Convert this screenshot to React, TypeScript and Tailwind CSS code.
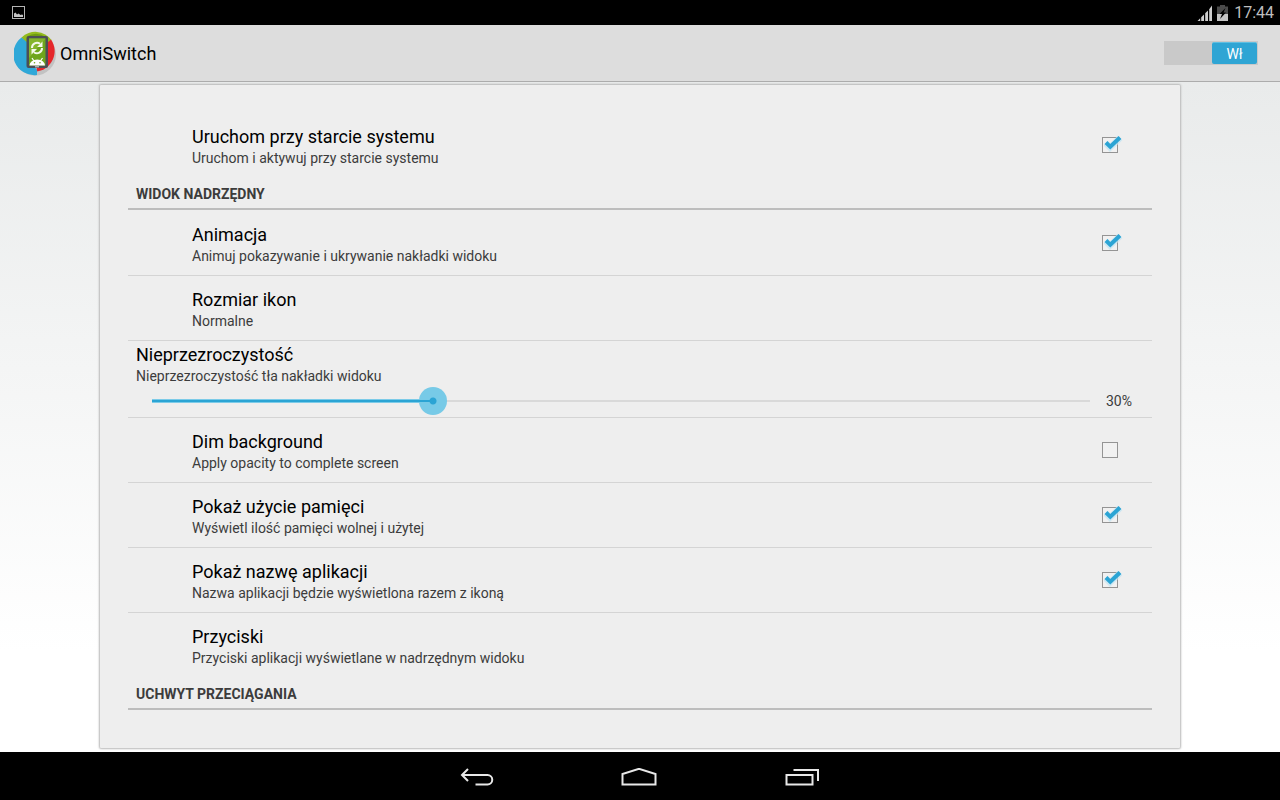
import { useState } from "react";
import type { ReactNode } from "react";

function AppLogo() {
  return (
    <svg viewBox="0 0 44 46" className="h-[46px] w-11 shrink-0" aria-hidden="true">
      <circle cx="21" cy="23.5" r="21" fill="#000" opacity="0.12" />
      <path d="M7.500 6.500 A20 20 0 0 1 37.500 9 L31 16 H15 Z" fill="#93bb1d" />
      <path d="M13 5.500 A17 17 0 0 1 31 5.500 Z" fill="#6f9a12" />
      <path d="M37 8.500 A20.500 20.500 0 0 1 22.500 40.500 L23 30 L33 12 Z" fill="#e5262b" />
      <path d="M7.500 6.500 A21 21 0 0 0 23 44 V39 L16 30 V14 Z" fill="#2fa8d8" />
      <rect x="12.500" y="5" width="21.500" height="32" rx="2" fill="#4c4f55" />
      <rect x="15" y="7.500" width="16.500" height="27" fill="#6fa51c" />
      <path d="M15 7.500 H31.500 L15 27 Z" fill="#84b52c" />
      <g fill="none" stroke="#f4f8ea" strokeWidth="2">
        <path d="M18 17 A5 5 0 0 1 26 12.800" />
        <path d="M28 17 A5 5 0 0 1 20 21.200" />
      </g>
      <path d="M28.500 10.500 V16 H23 Z M17.500 23.500 V18 H23 Z" fill="#f4f8ea" />
      <path d="M15.500 34.500 A7.700 6 0 0 1 31 34.500 Z" fill="#fff" />
      <path d="M18 27 L20 30 M28.500 27 L26.500 30" stroke="#fff" strokeWidth="1.200" />
      <circle cx="20.500" cy="31.800" r="0.800" fill="#6fa51c" />
      <circle cx="26" cy="31.800" r="0.800" fill="#6fa51c" />
      <rect x="21" y="35.300" width="4" height="1" fill="#ddd" />
    </svg>
  );
}

function StatusBar() {
  return (
    <div className="flex h-[25px] shrink-0 items-center justify-between bg-black pr-1.5 pl-3">
      <svg viewBox="0 0 13 13" className="size-[13px]" aria-hidden="true">
        <rect x="0.500" y="0.500" width="12" height="12" fill="none" stroke="#b4b4b4" />
        <path d="M2 11 V7.500 L3.500 6.500 L5 8.500 L6.500 7.500 L8.500 9 L10 8.500 L11 9 V11 Z" fill="#c4c4c4" />
      </svg>
      <div className="flex items-center text-[#bebebe]">
        <svg viewBox="0 0 16 16" className="size-4" aria-hidden="true">
          <g fill="#cfcfcf">
            <path d="M0.500 16 L3.200 13.300 V16 Z" />
            <path d="M4.200 16 V12.300 L7 9.500 V16 Z" />
            <path d="M8.200 16 V8.300 L11 5.500 V16 Z" />
            <path d="M12.200 16 V4.300 L15 0.500 V16 Z" />
          </g>
        </svg>
        <svg viewBox="0 0 11 16" className="mr-1.5 ml-1 h-4 w-[11px]" aria-hidden="true">
          <path d="M3 0 H8 V1.500 H11 V9 H0 V1.500 H3 Z" fill="#4a4a4a" />
          <path d="M0 9 H11 V16 H0 Z" fill="#c4c4c4" />
          <path d="M8.500 3 L2.500 9 H5 L3 14 L9 7.500 H6.500 Z" fill="#000" />
        </svg>
        <span className="text-base leading-6">17:44</span>
      </div>
    </div>
  );
}

function Item({ children, divider = true }: { children: ReactNode; divider?: boolean }) {
  return <li className={divider ? "border-b border-[#d4d4d4]" : "border-b border-transparent"}>{children}</li>;
}

function Labels({ title, summary }: { title: string; summary: string }) {
  return (
    <span className="flex flex-1 flex-col">
      <span className="text-lg leading-[22px] text-black">{title}</span>
      <span className="text-sm leading-5 text-[#3c3c3c]">{summary}</span>
    </span>
  );
}

type RowProps = { title: string; summary: string; divider?: boolean };

function CheckRow({ title, summary, divider, initial }: RowProps & { initial: boolean }) {
  const [on, setOn] = useState(initial);
  return (
    <Item divider={divider}>
      <label className="flex h-16 items-start pt-[13px] pr-[34px] pl-16">
        <Labels title={title} summary={summary} />
        <span className="relative mt-[11px] size-4">
          <input
            type="checkbox"
            checked={on}
            onChange={(e) => setOn(e.target.checked)}
            className="peer block size-4 appearance-none border border-[#949494] bg-[#f1f1f1]"
          />
          <svg
            viewBox="0 0 20 18"
            className="pointer-events-none absolute -top-0.5 left-0.5 hidden h-[18px] w-5 peer-checked:block"
            aria-hidden="true"
          >
            <path d="M1.500 8 L6 12.500 L16 3" fill="none" stroke="#bfe4f3" strokeWidth="6.500" opacity="0.700" />
            <path d="M2 7.500 L6.300 11.800 L16 2.500" fill="none" stroke="#2ba4d4" strokeWidth="4" />
          </svg>
        </span>
      </label>
    </Item>
  );
}

function LinkRow({ title, summary, divider }: RowProps) {
  return (
    <Item divider={divider}>
      <button type="button" className="flex h-16 w-full items-start pt-[13px] pl-16 text-left">
        <Labels title={title} summary={summary} />
      </button>
    </Item>
  );
}

function SectionHeader({ children }: { children: ReactNode }) {
  return (
    <Item divider={false}>
      <h2 className="h-8 border-b-2 border-[#bdbdbd] px-2 pt-1.5 text-sm leading-5 font-bold text-[#3c3c3c] uppercase">
        {children}
      </h2>
    </Item>
  );
}

function OpacityRow() {
  const [value, setValue] = useState(30);
  return (
    <Item>
      <div className="h-[76px] px-2 pt-[3px]">
        <label htmlFor="opacity" className="flex pb-px">
          <Labels title="Nieprzezroczystość" summary="Nieprzezroczystość tła nakładki widoku" />
        </label>
        <div className="flex h-7 items-center pl-0.5">
          <div className="relative flex h-7 flex-1 items-center px-3.5">
            <div className="h-0.5 w-full bg-[#d9d9d9]">
              <div
                className="-mt-px h-1 border-y border-[#7ccbe8] bg-[#2ba4d4]"
                style={{ width: `${value}%` }}
              />
            </div>
            <input
              id="opacity"
              type="range"
              min={0}
              max={100}
              value={value}
              onChange={(e) => setValue(Number(e.target.value))}
              className="absolute inset-0 h-7 w-full appearance-none bg-transparent [&::-webkit-slider-thumb]:size-7 [&::-webkit-slider-thumb]:appearance-none [&::-webkit-slider-thumb]:rounded-full [&::-webkit-slider-thumb]:bg-[radial-gradient(circle_at_center,#2ba4d4_3px,transparent_4px),linear-gradient(90deg,#2ba4d4_50%,transparent_50%)] [&::-webkit-slider-thumb]:bg-[length:100%_100%,100%_2px] [&::-webkit-slider-thumb]:bg-center [&::-webkit-slider-thumb]:bg-no-repeat [&::-webkit-slider-thumb]:bg-[#77cae7]"
            />
          </div>
          <output htmlFor="opacity" className="w-10 pl-0.5 text-sm leading-5 text-[#3c3c3c]">
            {value}%
          </output>
        </div>
      </div>
    </Item>
  );
}

function NavBar() {
  return (
    <nav className="flex h-12 shrink-0 items-center justify-center gap-[122px] bg-black">
      <button type="button" aria-label="Wstecz" className="pt-1">
        <svg viewBox="0 0 40 20" className="h-5 w-10" fill="none" stroke="#e8e8e8" strokeWidth="2" aria-hidden="true">
          <path d="M10 1 L4 7 L10 13 M4 7 H29.500 A4.700 4.700 0 0 1 29.500 16.500 H17.500" />
        </svg>
      </button>
      <button type="button" aria-label="Ekran główny" className="pt-1">
        <svg viewBox="0 0 40 20" className="h-5 w-10" fill="none" stroke="#e8e8e8" strokeWidth="2" aria-hidden="true">
          <path d="M2.500 16.500 V6 L19 0.800 L35.500 6 V16.500 Z" />
        </svg>
      </button>
      <button type="button" aria-label="Ostatnie aplikacje" className="pt-1">
        <svg viewBox="0 0 40 20" className="h-5 w-10" fill="none" stroke="#e8e8e8" strokeWidth="2" aria-hidden="true">
          <path d="M4.500 7 H30.500 V16.500 H4.500 Z M11.500 2 H36 V13" />
        </svg>
      </button>
    </nav>
  );
}

export default function App() {
  const [enabled, setEnabled] = useState(true);
  return (
    <div className="flex min-h-screen flex-col bg-white font-[Roboto,sans-serif]">
      <StatusBar />
      <header className="flex h-[57px] shrink-0 items-center justify-between border-b border-[#acacac] bg-[#dddddd] pr-[22px] pl-3.5">
        <div className="flex items-center gap-0.5 pt-0.5">
          <AppLogo />
          <h1 className="text-lg leading-6 text-black">OmniSwitch</h1>
        </div>
        <button
          type="button"
          role="switch"
          aria-checked={enabled}
          aria-label="OmniSwitch"
          onClick={() => setEnabled(!enabled)}
          className={`flex h-6 w-[94px] bg-[#c9c9c9] p-px ${enabled ? "justify-end" : "justify-start"}`}
        >
          <span
            className={`flex h-full w-[45px] items-center justify-center rounded-xs border-t text-sm leading-5 text-white ${
              enabled ? "border-[#5fbfe2] bg-[#2fa5d4]" : "border-[#aaaaaa] bg-[#999999]"
            }`}
          >
            {enabled ? "Wł" : "Wył"}
          </span>
        </button>
      </header>
      <main className="flex flex-1 flex-col bg-linear-to-b from-[#e9ebeb] to-white to-85% px-[100px] pt-[3px] pb-1">
        <section className="flex-1 rounded-[1px] bg-[#eeeeee] px-7 pt-7 pb-9 shadow-[0_0_2px_1px_#b8b8b8]">
          <ul>
            <CheckRow title="Uruchom przy starcie systemu" summary="Uruchom i aktywuj przy starcie systemu" divider={false} initial={true} />
            <SectionHeader>Widok nadrzędny</SectionHeader>
            <CheckRow title="Animacja" summary="Animuj pokazywanie i ukrywanie nakładki widoku" initial={true} />
            <LinkRow title="Rozmiar ikon" summary="Normalne" />
            <OpacityRow />
            <CheckRow title="Dim background" summary="Apply opacity to complete screen" initial={false} />
            <CheckRow title="Pokaż użycie pamięci" summary="Wyświetl ilość pamięci wolnej i użytej" initial={true} />
            <CheckRow title="Pokaż nazwę aplikacji" summary="Nazwa aplikacji będzie wyświetlona razem z ikoną" initial={true} />
            <LinkRow title="Przyciski" summary="Przyciski aplikacji wyświetlane w nadrzędnym widoku" divider={false} />
            <SectionHeader>Uchwyt przeciągania</SectionHeader>
          </ul>
        </section>
      </main>
      <NavBar />
    </div>
  );
}
